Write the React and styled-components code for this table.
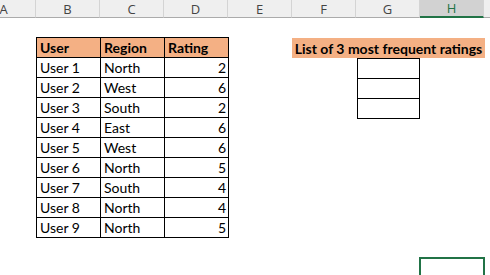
import styled, { createGlobalStyle } from 'styled-components';

const GlobalStyle = createGlobalStyle`
  html, body {
    margin: 0;
    padding: 0;
    background: #ffffff;
    overflow: hidden;
  }
`;

const users = [
  ['User 1', 'North', 2],
  ['User 2', 'West', 6],
  ['User 3', 'South', 2],
  ['User 4', 'East', 6],
  ['User 5', 'West', 6],
  ['User 6', 'North', 5],
  ['User 7', 'South', 4],
  ['User 8', 'North', 4],
  ['User 9', 'North', 5],
];

// column I is only a sliver at the right edge, so no letter for it
const columns = ['A', 'B', 'C', 'D', 'E', 'F', 'G', 'H', ''];

const Sheet = styled.div`
  display: grid;
  grid-template-columns: repeat(9, 64px);
  grid-template-rows: 18px repeat(13, 20px);
  margin-left: -28px;
  width: 576px;
  height: 278px;
  font-family: Lato, 'Liberation Sans', sans-serif;
  font-size: 14px;
  color: #000;
`;

const ColHeader = styled.div`
  grid-row: 1;
  box-sizing: border-box;
  display: flex;
  align-items: center;
  justify-content: center;
  background: ${(p) => (p.$active ? '#d2d2d2' : '#efefef')};
  color: ${(p) => (p.$active ? '#217346' : '#444444')};
  border-right: 1px solid #d4d4d4;
  border-bottom: ${(p) => (p.$active ? '2px solid #217346' : '1px solid #ababab')};
  font-family: 'Open Sans', 'Noto Sans', sans-serif;
  font-size: 13px;
`;

const DataTable = styled.table`
  grid-column: 2 / 5;
  grid-row: 3 / 13;
  border-collapse: collapse;
  width: 193px;
  height: 201px;
  margin-top: -1px;
  table-layout: fixed;
`;

const Cell = styled.td`
  border: 1px solid #000;
  height: 19px;
  padding: 0 2px 0 3px;
  line-height: 19px;
  vertical-align: bottom;
  white-space: nowrap;
  text-align: ${(p) => (p.$num ? 'right' : 'left')};
`;

const HeadCell = styled(Cell).attrs({ as: 'th' })`
  background: #f4b084;
  font-weight: 700;
  text-align: left;
`;

const Title = styled.div`
  grid-column: 6 / 9;
  grid-row: 3;
  display: flex;
  align-items: flex-end;
  justify-content: center;
  background: #f4b084;
  font-weight: 700;
  line-height: 19px;
  margin-right: -1px;
  white-space: nowrap;
`;

const AnswerBox = styled.div`
  grid-column: 7;
  grid-row: 4 / 7;
  display: grid;
  grid-template-rows: repeat(3, 1fr);
  border: 1px solid #000;
  border-top: none;
  margin-left: 1px;
  box-sizing: border-box;
  height: 61px;
`;

const AnswerSlot = styled.div`
  border-top: 1px solid #000;
`;

const Selection = styled.div`
  grid-column: 8;
  grid-row: 14;
  box-sizing: border-box;
  border: 2px solid #217346;
  margin: -1px 0 -2px -1px;
  width: 66px;
`;

export default function App() {
  return (
    <>
      <GlobalStyle />
      <Sheet>
        {columns.map((c, i) => (
          <ColHeader key={i} style={{ gridColumn: i + 1 }} $active={c === 'H'}>
            {c}
          </ColHeader>
        ))}

        <DataTable>
          <colgroup>
            <col style={{ width: 64 }} />
            <col style={{ width: 64 }} />
            <col style={{ width: 64 }} />
          </colgroup>
          <thead>
            <tr>
              <HeadCell>User</HeadCell>
              <HeadCell>Region</HeadCell>
              <HeadCell>Rating</HeadCell>
            </tr>
          </thead>
          <tbody>
            {users.map(([user, region, rating]) => (
              <tr key={user}>
                <Cell>{user}</Cell>
                <Cell>{region}</Cell>
                <Cell $num>{rating}</Cell>
              </tr>
            ))}
          </tbody>
        </DataTable>

        <Title>List of 3 most frequent ratings</Title>
        <AnswerBox>
          <AnswerSlot />
          <AnswerSlot />
          <AnswerSlot />
        </AnswerBox>

        <Selection />
      </Sheet>
    </>
  );
}
